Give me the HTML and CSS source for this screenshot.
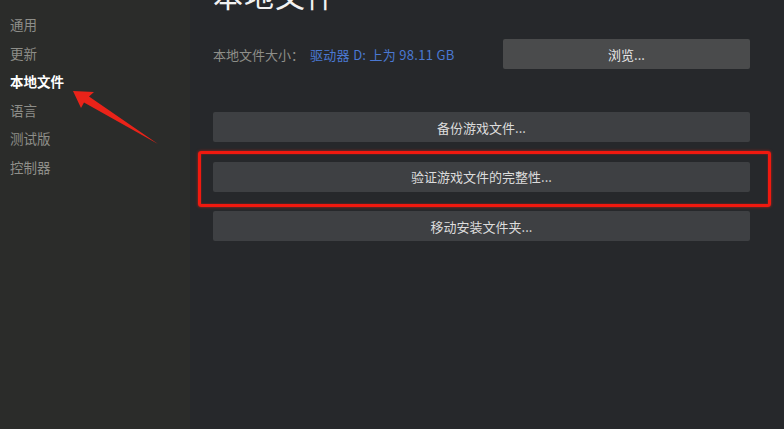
FILE: index.html
```html
<!DOCTYPE html>
<html lang="zh-CN">
<head>
<meta charset="utf-8">
<title>本地文件</title>
<link rel="stylesheet" href="styles.css">
</head>
<body>
<div class="app">
  <nav class="sidebar">
    <div class="nav-item">通用</div>
    <div class="nav-item">更新</div>
    <div class="nav-item active">本地文件</div>
    <div class="nav-item">语言</div>
    <div class="nav-item">测试版</div>
    <div class="nav-item">控制器</div>
  </nav>
  <main class="content">
    <h1 class="title">本地文件</h1>
    <div class="size-row">
      <span class="size-label">本地文件大小：</span>
      <span class="size-value">驱动器 D: 上为 98.11 GB</span>
      <button class="btn btn-browse">浏览...</button>
    </div>
    <div class="actions">
      <button class="btn btn-wide">备份游戏文件...</button>
      <div class="highlight-wrap">
        <button class="btn btn-wide">验证游戏文件的完整性...</button>
        <span class="highlight"></span>
      </div>
      <button class="btn btn-wide">移动安装文件夹...</button>
    </div>
  </main>
  <svg class="arrow" width="784" height="429" viewBox="0 0 784 429">
    <polygon points="73,91 94,92 89,96.5 158,144 84,102.5 81,108" fill="#ea2319"/>
  </svg>
</div>
</body>
</html>
```

FILE: styles.css
```css
html, body {
  margin: 0;
  padding: 0;
  background: #26282b;
  overflow: hidden;
}

body {
  font-family: "Noto Sans CJK SC", "Noto Sans", "Liberation Sans", sans-serif;
}

.app {
  position: relative;
  display: flex;
  width: 784px;
  height: 429px;
  overflow: hidden;
}

.sidebar {
  width: 190px;
  flex: none;
  background: #2b2c2a;
  padding: 10px 0 0 10px;
  box-sizing: border-box;
}

.nav-item {
  font-size: 13.5px;
  line-height: 28.5px;
  color: #8e8e89;
}

.nav-item.active {
  color: #ffffff;
  font-weight: bold;
}

.content {
  flex: 1;
  padding: 0 34px 0 23px;
  background: #26282b;
}

.title {
  margin: -21px 0 0 0;
  font-size: 30px;
  line-height: 30px;
  font-weight: normal;
  color: #f2f2f2;
  letter-spacing: 1px;
}

.size-row {
  display: flex;
  align-items: center;
  margin-top: 30px;
  height: 30px;
}

.size-label {
  font-size: 13px;
  color: #8e8e89;
}

.size-value {
  font-family: "Noto Sans CJK SC", "Liberation Sans", sans-serif;
  font-size: 13px;
  color: #4a78d2;
  margin-left: 6px;
  letter-spacing: 0.3px;
}

.btn {
  border: none;
  border-radius: 2px;
  font-family: inherit;
  font-size: 13px;
  color: #dcdcdc;
  height: 30px;
  padding: 0;
  display: flex;
  align-items: center;
  justify-content: center;
}

.btn-browse {
  margin-left: auto;
  width: 247px;
  background: #4a4b4c;
  color: #e6e6e6;
}

.actions {
  display: flex;
  flex-direction: column;
  gap: 19.5px;
  margin-top: 43px;
}

.btn-wide {
  width: 100%;
  background: #3e4043;
}

.highlight-wrap {
  position: relative;
}

.highlight {
  position: absolute;
  left: -15px;
  top: -11px;
  right: -21px;
  bottom: -15px;
  border: 3px solid #f0190f;
  border-radius: 3px;
  box-shadow: 0 0 3px rgba(240, 30, 20, 0.7), inset 0 0 2px rgba(240, 30, 20, 0.6);
  pointer-events: none;
}

.arrow {
  position: absolute;
  left: 0;
  top: 0;
  pointer-events: none;
}
```
